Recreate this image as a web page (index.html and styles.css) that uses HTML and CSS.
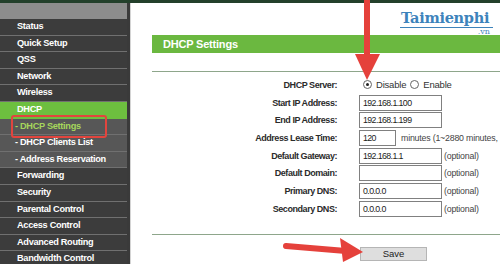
FILE: index.html
```html
<!DOCTYPE html>
<html lang="en">
<head>
    <meta charset="UTF-8">
    <title>DHCP Settings</title>
    <link rel="stylesheet" href="styles.css">
</head>
<body>
    <div class="topbar"></div>
    <div class="layout">
        <nav class="menu">
            <div class="menu-head"></div>
            <div class="item">Status</div>
            <div class="item">Quick Setup</div>
            <div class="item">QSS</div>
            <div class="item">Network</div>
            <div class="item">Wireless</div>
            <div class="item active">DHCP</div>
            <div class="item sub current">- DHCP Settings</div>
            <div class="item sub">- DHCP Clients List</div>
            <div class="item sub">- Address Reservation</div>
            <div class="item">Forwarding</div>
            <div class="item">Security</div>
            <div class="item">Parental Control</div>
            <div class="item">Access Control</div>
            <div class="item">Advanced Routing</div>
            <div class="item">Bandwidth Control</div>
        </nav>
        <main class="panel">
            <div class="brand">
                <span class="brand-name">Taimienphi</span>
                <span class="brand-tld">.vn</span>
            </div>
            <div class="title">DHCP Settings</div>
            <div class="form">
                <div class="row">
                    <label>DHCP Server:</label>
                    <div class="field">
                        <span class="radio checked"></span><span class="opt">Disable</span>
                        <span class="radio"></span><span class="opt">Enable</span>
                    </div>
                </div>
                <div class="row">
                    <label>Start IP Address:</label>
                    <div class="field"><span class="input">192.168.1.100</span></div>
                </div>
                <div class="row">
                    <label>End IP Address:</label>
                    <div class="field"><span class="input">192.168.1.199</span></div>
                </div>
                <div class="row">
                    <label>Address Lease Time:</label>
                    <div class="field"><span class="input short">120</span><span class="note wide">minutes (1~2880 minutes,</span></div>
                </div>
                <div class="row">
                    <label>Default Gateway:</label>
                    <div class="field"><span class="input">192.168.1.1</span><span class="note">(optional)</span></div>
                </div>
                <div class="row">
                    <label>Default Domain:</label>
                    <div class="field"><span class="input"></span><span class="note">(optional)</span></div>
                </div>
                <div class="row">
                    <label>Primary DNS:</label>
                    <div class="field"><span class="input">0.0.0.0</span><span class="note">(optional)</span></div>
                </div>
                <div class="row">
                    <label>Secondary DNS:</label>
                    <div class="field"><span class="input">0.0.0.0</span><span class="note">(optional)</span></div>
                </div>
            </div>
            <div class="actions">
                <button class="button">Save</button>
            </div>
        </main>
    </div>
    <svg class="marks" width="500" height="264" viewBox="0 0 500 264">
        <rect x="12" y="116" width="94" height="21" rx="2" fill="none" stroke="#e2453e" stroke-width="2"/>
        <line x1="367" y1="0" x2="367" y2="58" stroke="#e5413b" stroke-width="6"/>
        <polygon points="355,54 380,54 367,80" fill="#e5413b"/>
        <line x1="286" y1="246" x2="346" y2="251" stroke="#e5413b" stroke-width="6" stroke-linecap="round"/>
        <polygon points="340,238 363,252 343,262" fill="#e5413b"/>
    </svg>
</body>
</html>
```
FILE: styles.css
```css
body {
    margin: 0;
    width: 500px;
    height: 264px;
    overflow: hidden;
    position: relative;
    background: #ffffff;
    font-family: "Liberation Sans", Arial, sans-serif;
}

.topbar {
    height: 3px;
    background-color: #23402b;
}

.layout {
    display: flex;
    height: 261px;
}

.menu {
    width: 127px;
    flex-shrink: 0;
    border-right: 3px solid #3a3a3a;
    background-color: #3c3c3c;
    overflow: hidden;
}

.menu-head {
    height: 16px;
    background-color: #8d8d8d;
}

.item {
    height: 15.6px;
    line-height: 15.6px;
    border-bottom: 1px solid #707070;
    padding-left: 17px;
    color: #ffffff;
    font-size: 9.2px;
    font-weight: bold;
    letter-spacing: -0.3px;
    background-color: #3c3c3c;
    white-space: nowrap;
}

.item.active {
    background-color: #6dbf3f;
    border-bottom-color: #6dbf3f;
}

.item.sub {
    padding-left: 15px;
    background-color: #575757;
}

.item.current {
    color: #a6d65c;
}

.panel {
    flex: 1;
    border-left: 1px solid #d4d4d4;
    padding: 32px 0 0 21px;
    position: relative;
    overflow: hidden;
}

.brand {
    position: absolute;
    top: 5px;
    left: 269px;
    width: 93px;
    border-bottom: 1px solid #3d83bb;
    font-family: "DejaVu Serif", serif;
    color: #3d83bb;
}

.brand-name {
    display: block;
    font-size: 14.5px;
    font-weight: bold;
    line-height: 19px;
    padding-left: 1px;
    letter-spacing: -0.3px;
}

.brand-tld {
    position: absolute;
    right: 3px;
    top: 19px;
    font-size: 8px;
}

.title {
    height: 18px;
    line-height: 18px;
    background-color: #6bb840;
    color: #ffffff;
    font-size: 11px;
    font-weight: bold;
    padding-left: 11px;
    letter-spacing: -0.2px;
}

.form {
    margin-top: 18px;
    border-top: 1px solid #8ea68b;
    padding-top: 4px;
}

.row {
    display: grid;
    grid-template-columns: 185px 1fr;
    column-gap: 22px;
    height: 17.7px;
    align-items: center;
}

.row label {
    text-align: right;
    font-size: 9px;
    font-weight: bold;
    letter-spacing: -0.45px;
    color: #2b2b2b;
}

.field {
    display: flex;
    align-items: center;
    white-space: nowrap;
    font-size: 9px;
    letter-spacing: -0.2px;
    color: #444444;
}

.radio {
    width: 7px;
    height: 7px;
    border: 1px solid #666666;
    border-radius: 50%;
    margin-left: 4px;
    margin-right: 4px;
    position: relative;
}

.radio.checked::after {
    content: "";
    position: absolute;
    top: 2px;
    left: 2px;
    width: 3px;
    height: 3px;
    border-radius: 50%;
    background-color: #222222;
}

.opt {
    font-size: 9.5px;
    color: #333333;
}

.input {
    width: 78px;
    height: 14px;
    line-height: 15px;
    border: 1px solid #808080;
    padding-left: 3px;
    font-size: 8.8px;
    letter-spacing: -0.6px;
    color: #222222;
    background: #ffffff;
}

.input.short {
    width: 32px;
}

.note {
    margin-left: 2px;
    font-size: 8.8px;
}

.note.wide {
    margin-left: 5px;
}

.actions {
    margin-top: 16px;
    border-top: 1px solid #8ea68b;
    padding: 8px 0 0 208px;
}

.button {
    width: 67px;
    height: 14px;
    padding: 0;
    border: 1px solid #b5b5b5;
    background-color: #dedede;
    font-family: "Liberation Sans", Arial, sans-serif;
    font-size: 9.5px;
    color: #222222;
    line-height: 12px;
}

.marks {
    position: absolute;
    top: 0;
    left: 0;
    pointer-events: none;
}
```
